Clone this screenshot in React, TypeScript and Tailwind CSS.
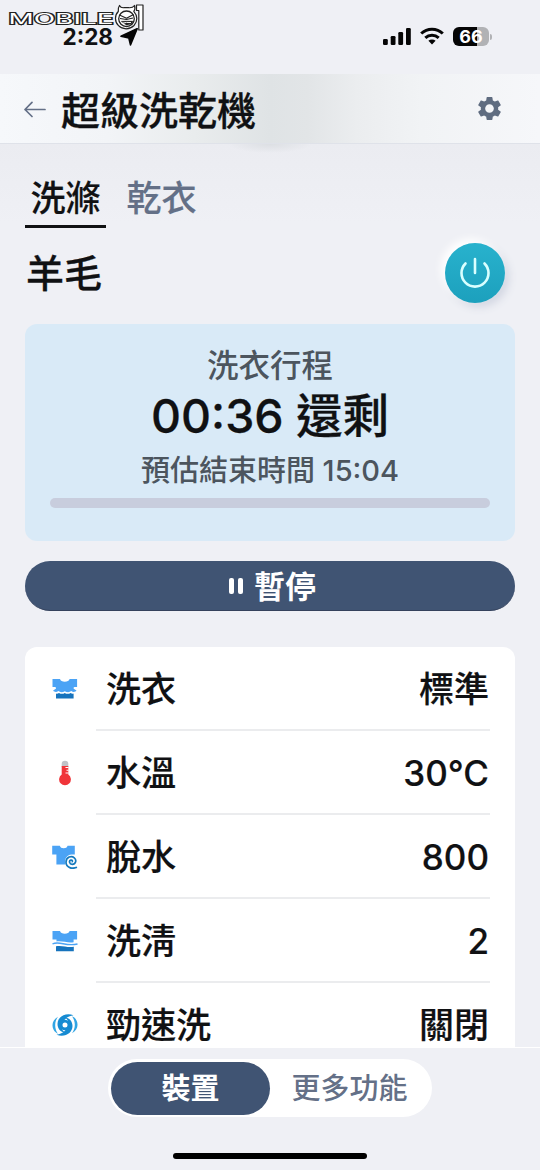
import type { ReactNode } from "react";

function Logo() {
  return (
    <svg className="absolute left-2 top-1" width="140" height="32" viewBox="8 4 140 32">
      <text
        x="8.5"
        y="23.500"
        textLength="105"
        lengthAdjust="spacingAndGlyphs"
        fontFamily="Inter, sans-serif"
        fontSize="14"
        fontWeight="400"
        fill="#fff"
        stroke="#222"
        strokeWidth="1.800"
        paintOrder="stroke"
      >
        MOBILE
      </text>
      <g fill="#fff" stroke="#222" strokeLinejoin="round">
        <path d="M119.500 5.500c1 2 2.500 2.500 4.500 2.200h4.500c2.500 .3 4.500-.2 6-2.200.8 2.500.3 4.500-.7 5.800 4 4.500 3.900 10.200.2 14.200-4.500 4.500-11.500 4.200-15.500.2-4-4-4-10.500-.2-14.200-.4-2 .2-4.500 1.200-6z" strokeWidth="1.200" />
        <circle cx="126.500" cy="18.800" r="7.800" strokeWidth="1.300" />
        <path d="M119.500 15l7 3.200 7-3.700M120 18.500l6.500 1 6.500-1.500" fill="none" strokeWidth="1.200" />
        <path d="M121 21.300l5.500-.4 6.500.2-1.500 3-5 1.200z" fill="#222" strokeWidth=".3" />
        <path d="M122.500 23.200l4-.8 4.500 .1" fill="none" stroke="#fff" strokeWidth="1" />
        <path d="M136.500 5h6.500v25h-4.200V10.500h-2.300z" strokeWidth="1.200" />
      </g>
    </svg>
  );
}

function StatusBar() {
  return (
    <div className="relative flex h-[74px] shrink-0 items-start justify-between pl-[62.5px] pr-12 pt-[26px]">
      <Logo />
      <div className="flex items-center gap-[7px]">
        <span className="text-[22.500px] font-bold leading-[22px]">2:28</span>
        <svg width="18" height="18" viewBox="0 0 18 18" fill="#050505">
          <path d="M17.200 .6 10.500 17 8.800 10 1 8.300z" stroke="#050505" strokeWidth="1.500" strokeLinejoin="round" />
        </svg>
      </div>
      <div className="flex items-start gap-[9px] pt-px">
        <svg width="28" height="18" viewBox="0 0 28 18" fill="#050505">
          <rect x="0" y="12" width="4.800" height="6" rx="1.300" />
          <rect x="7.700" y="9" width="4.800" height="9" rx="1.300" />
          <rect x="15.300" y="5" width="4.800" height="13" rx="1.300" />
          <rect x="23" y="1" width="4.800" height="17" rx="1.300" />
        </svg>
        <svg width="24" height="18" viewBox="0 0 24 18" fill="none" stroke="#050505" strokeWidth="3">
          <path d="M1.200 6.500a15.600 15.600 0 0 1 21.600 0M5.300 10.900a9.900 9.900 0 0 1 13.400 0" />
          <path d="M12 17.500l-3.600-3.700a5.300 5.300 0 0 1 7.200 0z" fill="#050505" stroke="none" />
        </svg>
        <div className="flex items-center gap-px">
          <span className="flex h-[19px] w-9 items-center justify-center rounded-md bg-linear-to-r from-[#050505] from-66% to-[#b1b2b5] to-66% text-[18px] font-bold leading-none text-white">
            66
          </span>
          <span className="h-1.5 w-0.5 rounded-r bg-[#b1b2b5]" />
        </div>
      </div>
    </div>
  );
}

function Gear() {
  return (
    <svg width="29" height="29" viewBox="0 0 24 24" fill="#5f6c80">
      <path d="M19.140 12.940c.04-.3.06-.61.06-.94 0-.32-.02-.64-.07-.94l2.030-1.580c.18-.14.23-.41.12-.61l-1.920-3.320c-.12-.22-.37-.29-.59-.22l-2.390.96c-.5-.38-1.030-.7-1.620-.94l-.36-2.540c-.04-.24-.24-.41-.48-.41h-3.840c-.24 0-.43.17-.47.41l-.36 2.540c-.59.24-1.130.57-1.620.94l-2.390-.96c-.22-.08-.47 0-.59.22L2.740 8.870c-.12.21-.08.47.12.61l2.030 1.580c-.05.3-.09.63-.09.94s.02.64.07.94l-2.030 1.580c-.18.14-.23.41-.12.61l1.920 3.320c.12.22.37.29.59.22l2.390-.96c.5.38 1.030.7 1.620.94l.36 2.540c.05.24.24.41.48.41h3.840c.24 0 .44-.17.47-.41l.36-2.540c.59-.24 1.130-.56 1.620-.94l2.390.96c.22.08.47 0 .59-.22l1.920-3.320c.12-.22.07-.47-.12-.61l-2.010-1.580zM12 15.600c-1.980 0-3.600-1.620-3.600-3.600s1.620-3.600 3.600-3.600 3.600 1.620 3.600 3.600-1.620 3.600-3.600 3.600z" />
    </svg>
  );
}

function WashIcon() {
  return (
    <svg width="26" height="20" viewBox="0 0 26 20">
      <path d="M.5 0h7.500c.5 2 2.200 2.700 4.800 2.700S17.100 2 17.600 0h7.500v7.900h-2.300c-1.300 0-1.700 1.500-.7 2.200l2.400 1.400c-1.500 1.900-3.700 1.600-5.200.5-1.800 1.500-4.200 1.500-6.500.2-2.300 1.300-4.700 1.300-6.500-.2-1.500 1.100-3.700 1.400-5.200-.5l2.400-1.400c1-.7.600-2.200-.7-2.200H.5z" fill="#4ba3f5" />
      <path d="M4 14.500c1 .4 2 .2 3-.6 2 1.300 4 1.200 5.800.1 1.800 1.100 3.800 1.200 5.800-.1 1 .8 2 1 3 .6v5H4z" fill="#1673bd" />
    </svg>
  );
}

function TempIcon() {
  return (
    <svg width="26" height="26" viewBox="0 0 26 26">
      <path d="M9.700 7V4a3.300 3.300 0 0 1 6.600 0v3z" fill="#c0c3c8" />
      <path d="M9.700 6h6.600v8.500a5.900 5.900 0 1 1-6.600 0z" fill="#f0353a" />
      <path d="M13.500 7.500h3M14.500 10.200h2M13.500 13h3" stroke="#fff" strokeWidth="1.100" />
    </svg>
  );
}

function SpinIcon() {
  return (
    <svg width="26" height="24" viewBox="0 0 26 24">
      <path d="M.2 .8h7.600c.5 1.700 1.800 2.500 3.900 2.500s3.400-.8 3.900-2.500h7.200v8.700h-3.200c-5 .5-7.500 4.500-6.300 10H4.400V9.500H.2z" fill="#4ba3f5" />
      <path d="M25 22.300c-4.500 2-11 .5-11-5s5.500-7 8.300-4.500 1.200 6.500-2 6.500-3.500-3.700-1.500-4.200 2 1.800.8 1.800" fill="none" stroke="#1479bd" strokeWidth="1.700" />
    </svg>
  );
}

function RinseIcon() {
  return (
    <svg width="26" height="22" viewBox="0 0 26 22">
      <path d="M.5 1h7.500c.5 2 2.200 2.700 4.800 2.700S17.100 3 17.600 1h7.500v8.500h-3.500v2.700c-6 1-10.500-1.500-17.100-.8V9.500h-4z" fill="#4ba3f5" />
      <path d="M.5 13.800c8-3.200 13 3.200 25 .2" fill="none" stroke="#4ba3f5" strokeWidth="1.300" />
      <path d="M4 16.200c7-1.200 11 1.800 17.800.6v4.400H4z" fill="#1673bd" />
    </svg>
  );
}

function SwirlIcon() {
  return (
    <svg width="26" height="24" viewBox="0 0 26 24">
      <g id="arm">
        <path d="M21.500 2.200C13-.8 5.500 4 5.500 11c0 5 3.500 8.800 8 8.500-3-1.500-4.300-4-3.600-7C10.800 7.500 15 3 21.500 2.200z" fill="#168bd2" />
        <path d="M6 3.800C.8 6.500-.8 12 1.500 16.500c1 2 2.500 3.500 4.500 4.200C2.500 16 2 9 6 3.800z" fill="#31a5e4" />
      </g>
      <use href="#arm" transform="rotate(180 13 12)" />
      <circle cx="13" cy="12" r="3.900" fill="#fff" stroke="#168bd2" strokeWidth="2.800" />
    </svg>
  );
}

const SETTINGS: { icon: ReactNode; label: string; value: string }[] = [
  { icon: <WashIcon />, label: "洗衣", value: "標準" },
  { icon: <TempIcon />, label: "水溫", value: "30°C" },
  { icon: <SpinIcon />, label: "脫水", value: "800" },
  { icon: <RinseIcon />, label: "洗淸", value: "2" },
  { icon: <SwirlIcon />, label: "勁速洗", value: "關閉" },
];

export default function App() {
  return (
    <div className="flex h-[1170px] w-[540px] flex-col overflow-hidden bg-[#eff0f5] font-['Inter','Noto_Sans_CJK_TC',sans-serif] font-medium text-[#101113]">
      <StatusBar />

      {/* Header */}
      <header className="flex h-[70px] shrink-0 items-center border-b border-[#dfe2e9] bg-[linear-gradient(90deg,#f6f8fb_0%,#f2f4f7_20%,#e9eced_36%,#dfe3e5_50%,#e2e5e7_57%,#ebedef_66%,#f1f3f5_78%,#f6f7fa_100%)] pl-6 pr-9">
        <svg width="22" height="18" viewBox="0 0 22 18" fill="none" stroke="#647087" strokeWidth="1.700" strokeLinecap="round" strokeLinejoin="round">
          <path d="M21 9.500H1M8 2.300 1 9.500l7 7" />
        </svg>
        <h1 className="ml-[15px] grow pt-[3px] text-[39px] leading-none [-webkit-text-stroke:0.3px]">超級洗乾機</h1>
        <Gear />
      </header>

      <main className="flex min-h-0 grow basis-0 flex-col overflow-hidden bg-[radial-gradient(ellipse_42px_9px_at_270px_0px,#dcdfe3,transparent),linear-gradient(180deg,#ebecf1,#eff0f5_80px)] px-[25px]">
        {/* Tabs */}
        <div className="flex shrink-0 gap-4 pt-6 text-[35px] leading-[60px] [-webkit-text-stroke:0.2px]">
          <span className="h-[60px] border-b-[3px] border-[#101113] px-[5.5px]">洗滌</span>
          <span className="h-[60px] px-[4.5px] text-[#647087]">乾衣</span>
        </div>

        <div className="mb-1.5 flex h-[90px] shrink-0 items-center justify-between pr-2.5">
          <h2 className="pl-px text-[38px] leading-none [-webkit-text-stroke:0.3px]">羊毛</h2>
          <button className="flex size-[60px] items-center justify-center rounded-full bg-linear-to-b from-[#28b2cd] to-[#1ca0bd] shadow-[-4px_-4px_8px_#ffffff,4px_4px_8px_#d2d6e2]">
            <svg width="32" height="32" viewBox="0 0 32 32" fill="none" stroke="#d9ffff" strokeWidth="2.600" strokeLinecap="round">
              <path d="M16 2v14M6.500 6.500a13.500 13.500 0 1 0 19 0" />
            </svg>
          </button>
        </div>

        {/* Remaining time */}
        <section className="flex h-[217px] shrink-0 flex-col items-center rounded-xl bg-[#d9eaf7] px-[25px] pt-[22px]">
          <p className="text-[31.500px] leading-10 text-[#4c555e]">洗衣行程</p>
          <p className="text-[46.500px] leading-[60px] [-webkit-text-stroke:0.3px]">00:36 還剩</p>
          <p className="text-[29px] leading-[50px] text-[#4c555e]">預估結束時間 15:04</p>
          <div className="mt-0.5 h-2.5 w-full shrink-0 rounded-full bg-[#c8cddd]" />
        </section>

        <button className="mt-5 flex h-[50px] shrink-0 items-center justify-center gap-[11px] rounded-full border-b border-[#34415c] bg-[#405473] pl-[5px] text-[31px] font-bold leading-none text-white">
          <span className="flex gap-1">
            <i className="h-4 w-[5px] rounded-[2px] bg-white" />
            <i className="h-4 w-[5px] rounded-[2px] bg-white" />
          </span>
          <span className="pt-0.5">暫停</span>
        </button>

        {/* Programme settings */}
        <ul className="mt-9 shrink-0 rounded-t-xl bg-white pl-[27px] pr-[25px]">
          {SETTINGS.map((item) => (
            <li key={item.label} className="flex h-[84px] items-center">
              <span className="flex w-[44px] shrink-0">{item.icon}</span>
              <div className="flex h-full grow items-center justify-between border-b-2 border-[#ebecee] pl-2.5 pr-px pt-0.5 text-[35px] leading-none [-webkit-text-stroke:0.2px]">
                <span>{item.label}</span>
                <span>{item.value}</span>
              </div>
            </li>
          ))}
        </ul>
      </main>

      {/* Bottom switcher */}
      <footer className="flex h-[123px] shrink-0 flex-col items-center border-t border-white pt-[11px]">
        <div className="flex h-[58px] w-[324px] items-center rounded-full bg-white p-[3px] text-[29px] leading-none">
          <span className="flex h-[53px] w-[159px] items-center justify-center rounded-full bg-[#405473] pt-px font-bold text-white">裝置</span>
          <span className="flex grow items-center justify-center pt-px text-[#647087]">更多功能</span>
        </div>
        <div className="mt-9 h-1.5 w-[194px] rounded-full bg-black" />
      </footer>
    </div>
  );
}
